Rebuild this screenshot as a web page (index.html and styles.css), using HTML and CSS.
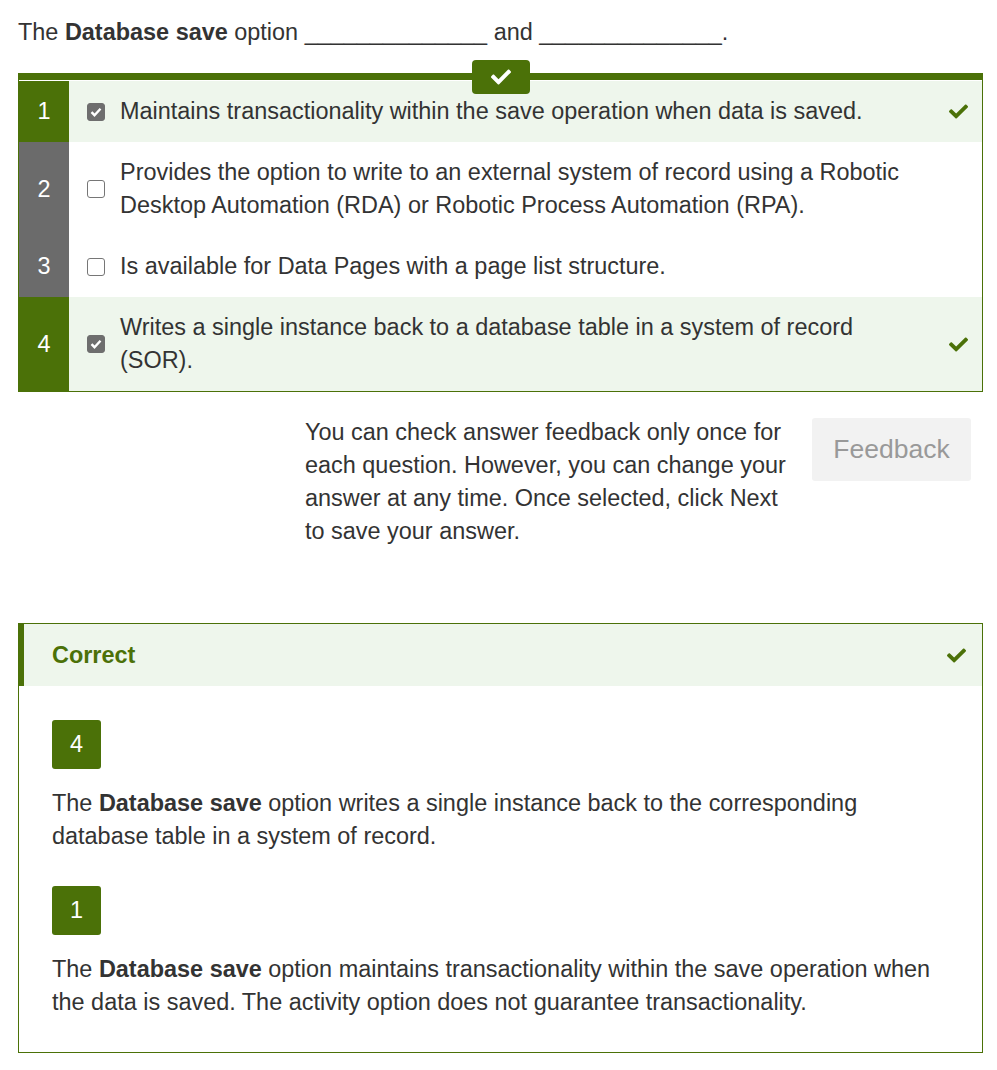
FILE: index.html
```html
<!DOCTYPE html>
<html>
<head>
<meta charset="utf-8">
<link rel="stylesheet" href="styles.css">
</head>
<body>
<div class="page">
  <p class="question">The <b>Database save</b> option ______________ and ______________.</p>

  <div class="options">
    <div class="tab"><svg class="ico" viewBox="0 0 512 512"><path fill="#fff" d="M173.898 439.404l-166.4-166.4c-9.997-9.997-9.997-26.206 0-36.204l36.203-36.204c9.997-9.998 26.207-9.998 36.204 0L192 312.69 432.095 72.596c9.997-9.997 26.207-9.997 36.204 0l36.203 36.204c9.997 9.997 9.997 26.206 0 36.204l-294.4 294.401c-9.998 9.997-26.207 9.997-36.204-.001z"/></svg></div>

    <div class="row selected">
      <div class="num">1</div>
      <div class="cell">
        <span class="box checked"><svg viewBox="0 0 16 16"><path d="M3.5 8.2l3 3 6-6.4" fill="none" stroke="#fff" stroke-width="2.4"/></svg></span>
        <span class="text">Maintains transactionality within the save operation when data is saved.</span>
        <svg class="mark" viewBox="0 0 512 512"><path d="M173.898 439.404l-166.4-166.4c-9.997-9.997-9.997-26.206 0-36.204l36.203-36.204c9.997-9.998 26.207-9.998 36.204 0L192 312.69 432.095 72.596c9.997-9.997 26.207-9.997 36.204 0l36.203 36.204c9.997 9.997 9.997 26.206 0 36.204l-294.4 294.401c-9.998 9.997-26.207 9.997-36.204-.001z"/></svg>
      </div>
    </div>

    <div class="row">
      <div class="num gray">2</div>
      <div class="cell">
        <span class="box"></span>
        <span class="text">Provides the option to write to an external system of record using a Robotic Desktop Automation (RDA) or Robotic Process Automation (RPA).</span>
      </div>
    </div>

    <div class="row">
      <div class="num gray">3</div>
      <div class="cell">
        <span class="box"></span>
        <span class="text">Is available for Data Pages with a page list structure.</span>
      </div>
    </div>

    <div class="row selected">
      <div class="num">4</div>
      <div class="cell">
        <span class="box checked"><svg viewBox="0 0 16 16"><path d="M3.5 8.2l3 3 6-6.4" fill="none" stroke="#fff" stroke-width="2.4"/></svg></span>
        <span class="text">Writes a single instance back to a database table in a system of record (SOR).</span>
        <svg class="mark" viewBox="0 0 512 512"><path d="M173.898 439.404l-166.4-166.4c-9.997-9.997-9.997-26.206 0-36.204l36.203-36.204c9.997-9.998 26.207-9.998 36.204 0L192 312.69 432.095 72.596c9.997-9.997 26.207-9.997 36.204 0l36.203 36.204c9.997 9.997 9.997 26.206 0 36.204l-294.4 294.401c-9.998 9.997-26.207 9.997-36.204-.001z"/></svg>
      </div>
    </div>
  </div>

  <div class="actions">
    <p class="hint">You can check answer feedback only once for each question. However, you can change your answer at any time. Once selected, click Next to save your answer.</p>
    <button class="fb-btn">Feedback</button>
  </div>

  <div class="result">
    <div class="result-head">
      <span class="result-title">Correct</span>
      <svg class="mark" viewBox="0 0 512 512"><path d="M173.898 439.404l-166.4-166.4c-9.997-9.997-9.997-26.206 0-36.204l36.203-36.204c9.997-9.998 26.207-9.998 36.204 0L192 312.69 432.095 72.596c9.997-9.997 26.207-9.997 36.204 0l36.203 36.204c9.997 9.997 9.997 26.206 0 36.204l-294.4 294.401c-9.998 9.997-26.207 9.997-36.204-.001z"/></svg>
    </div>
    <div class="result-body">
      <div class="badge">4</div>
      <p class="explain">The <b>Database save</b> option writes a single instance back to the corresponding database table in a system of record.</p>
      <div class="badge">1</div>
      <p class="explain">The <b>Database save</b> option maintains transactionality within the save operation when the data is saved. The activity option does not guarantee transactionality.</p>
    </div>
  </div>
</div>
</body>
</html>
```

FILE: styles.css
```css
* { box-sizing: border-box; }
html, body { margin: 0; padding: 0; background: #fff; }
body {
  font-family: "Liberation Sans", Arial, sans-serif;
  font-size: 23.45px;
  line-height: 33px;
  color: #333;
}
.page {
  padding: 16px 14px 0 18px;
}
.question { margin: 0 0 24px 0; }

.options {
  position: relative;
  border: 1px solid #4b7108;
  border-top: 7px solid #4b7108;
  padding-top: 1px;
}
.tab {
  position: absolute;
  left: 453px;
  top: -20px;
  width: 58px;
  height: 34px;
  background: #4b7108;
  border-radius: 4px;
  display: flex;
  align-items: center;
  justify-content: center;
}
.tab .ico { width: 20px; height: 20px; }

.row { display: flex; }
.row.selected { background: #eef6ec; }
.num {
  width: 50px;
  flex: none;
  background: #4b7108;
  color: #fff;
  display: flex;
  align-items: center;
  justify-content: center;
}
.num.gray { background: #6b6b6b; }
.cell {
  flex: 1;
  display: flex;
  align-items: center;
  padding: 14px 14px 14px 18px;
}
.box {
  flex: none;
  width: 18px;
  height: 18px;
  border: 1.5px solid #767676;
  border-radius: 3px;
  background: #fff;
  margin-right: 15px;
  display: flex;
}
.box.checked { background: #6e6e6e; border-color: #6e6e6e; }
.box svg { width: 100%; height: 100%; }
.text { flex: 1; padding-right: 40px; }
.mark { width: 19px; height: 19px; fill: #4b7108; flex: none; }

.actions {
  display: flex;
  justify-content: flex-end;
  align-items: flex-start;
  gap: 22px;
  padding-right: 12px;
  margin-top: 24px;
}
.hint { margin: 0; width: 485px; }
.fb-btn {
  margin-top: 2px;
  font-family: "Liberation Sans", Arial, sans-serif;
  font-size: 26.5px;
  color: #999;
  background: #f2f2f2;
  border: none;
  border-radius: 3px;
  height: 63px;
  width: 159px;
  padding: 0;
}

.result {
  margin-top: 75px;
  border: 1px solid #4b7108;
}
.result-head {
  display: flex;
  align-items: center;
  justify-content: space-between;
  height: 62px;
  background: #eef6ec;
  border-left: 6px solid #4b7108;
  margin-left: -1px;
  padding: 0 16px 0 28px;
}
.result-title { font-weight: bold; color: #4b7108; }
.result-body { padding: 34px 33px 33px 33px; }
.badge {
  width: 49px;
  height: 49px;
  background: #4b7108;
  color: #fff;
  border-radius: 3px;
  display: flex;
  align-items: center;
  justify-content: center;
}
.explain { margin: 18px 0 33px 0; }
.explain:last-child { margin-bottom: 0; }
```
